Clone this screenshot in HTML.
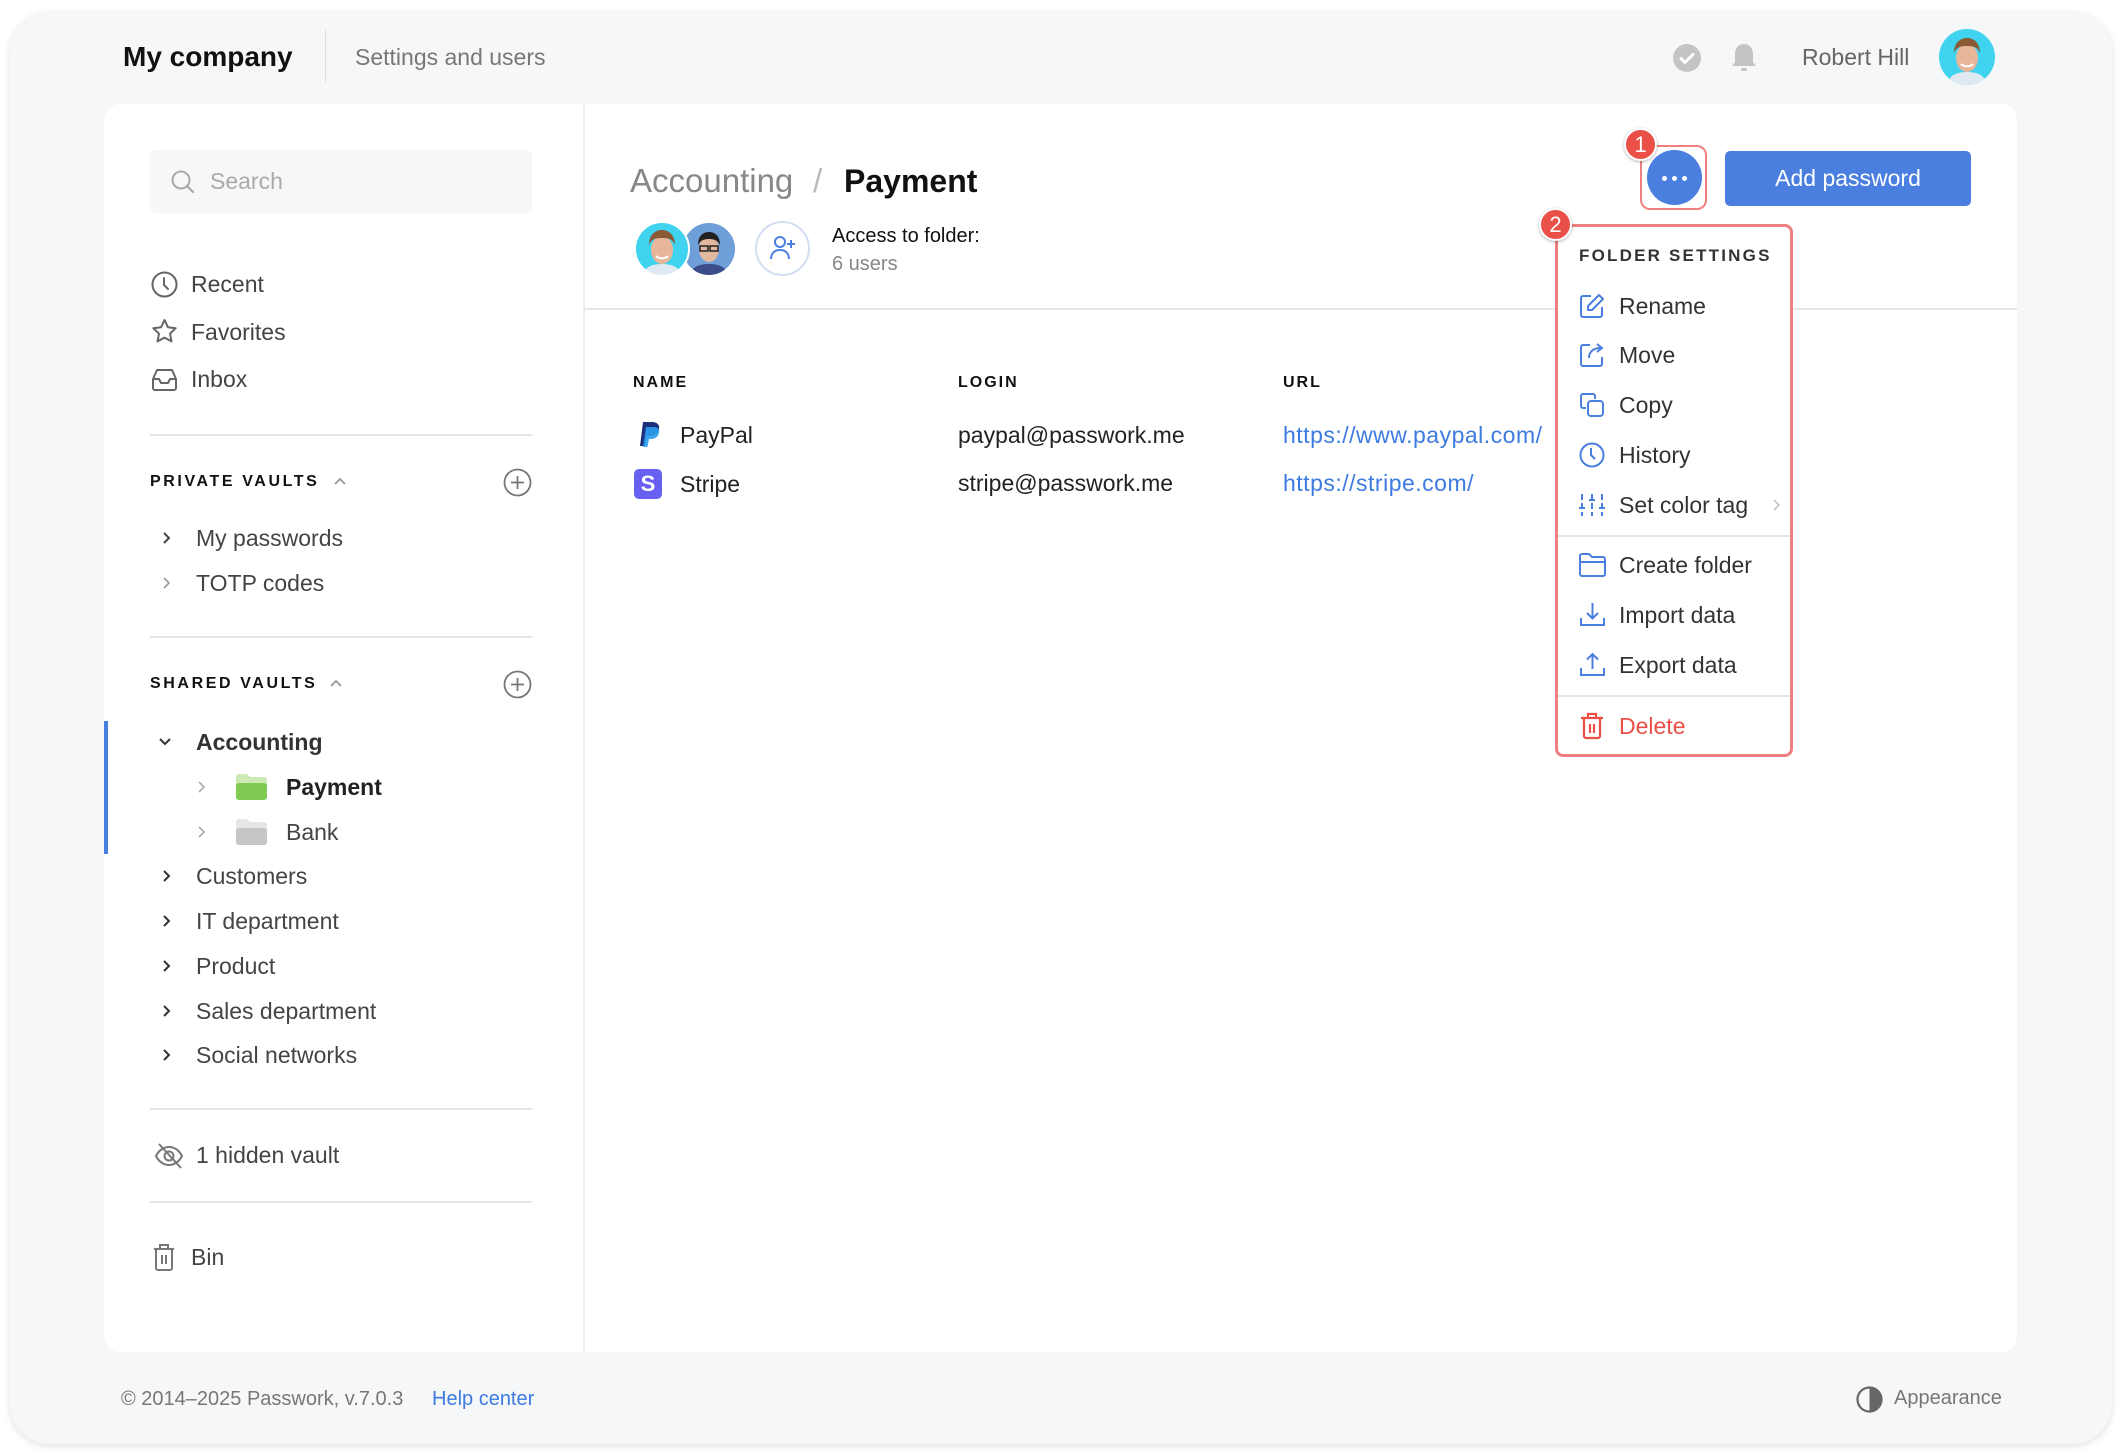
<!DOCTYPE html>
<html><head><meta charset="utf-8">
<style>
*{margin:0;padding:0;box-sizing:border-box}
html,body{width:2124px;height:1456px;background:#fff;overflow:hidden;font-family:"Liberation Sans",sans-serif;color:#333}
#win{position:absolute;left:10px;top:12px;width:2102px;height:1432px;background:#f6f7f9;border-radius:40px;box-shadow:0 2px 8px rgba(0,0,0,.12)}
.t{position:absolute;white-space:nowrap;line-height:32px}
#card{position:absolute;left:104px;top:104px;width:1913px;height:1248px;background:#fff;border-radius:16px}
.hr{position:absolute;height:2px;background:#e4e5e8}
.side{font-size:23px;color:#444}
.cap{font-size:16px;font-weight:bold;letter-spacing:2.6px;color:#111}
svg{position:absolute;overflow:visible}
.mi{font-size:23px;color:#333;left:1619px}
</style></head><body>
<div id="win"></div>

<!-- header -->
<div class="t" style="left:123px;top:41px;font-size:28px;font-weight:bold;color:#111">My company</div>
<div style="position:absolute;left:325px;top:30px;width:1px;height:52px;background:#ddd"></div>
<div class="t" style="left:355px;top:41px;font-size:23px;color:#777">Settings and users</div>
<svg style="left:1672px;top:43px" width="30" height="30" viewBox="0 0 30 30"><circle cx="15" cy="15" r="14" fill="#c4c4c4"/><path d="M9 15.5l4 4 8-8" stroke="#fff" stroke-width="3" fill="none" stroke-linecap="round" stroke-linejoin="round"/></svg>
<svg style="left:1729px;top:42px" width="30" height="32" viewBox="0 0 30 32"><path d="M15 2c-6 0-9 5-9 10v8l-3 4h24l-3-4v-8c0-5-3-10-9-10z" fill="#c4c4c4"/><rect x="12" y="26" width="6" height="3" rx="1.5" fill="#c4c4c4"/></svg>
<div class="t" style="left:1802px;top:41px;font-size:23px;color:#666">Robert Hill</div>
<svg style="left:1939px;top:29px" width="56" height="56" viewBox="0 0 56 56"><clipPath id="c0"><circle cx="28" cy="28" r="28"/></clipPath><g clip-path="url(#c0)"><rect width="56" height="56" fill="#3fd3ef"/><path d="M8 56c2-10 10-13 20-13s18 3 20 13z" fill="#dfe9f2"/><ellipse cx="28" cy="29" rx="11" ry="14" fill="#e8b79a"/><path d="M15 24c0-10 6-15 13-15s13 5 13 15c-2-5-5-7-13-7s-11 2-13 7z" fill="#8a5a35"/><path d="M22 35c3 3 9 3 12 0" stroke="#fff" stroke-width="2" fill="none"/></g></svg>

<div id="card"></div>
<div style="position:absolute;left:583px;top:104px;width:2px;height:1248px;background:#ececee"></div>

<!-- sidebar -->
<div style="position:absolute;left:150px;top:150px;width:382px;height:63px;background:#f6f7f9;border-radius:6px"></div>
<svg style="left:170px;top:169px" width="26" height="26" viewBox="0 0 26 26"><circle cx="11" cy="11" r="8.5" stroke="#aaa" stroke-width="2" fill="none"/><path d="M17 17l6 6" stroke="#aaa" stroke-width="2.2" stroke-linecap="round"/></svg>
<div class="t" style="left:210px;top:165px;font-size:23px;color:#aaa">Search</div>

<svg style="left:151px;top:271px" width="27" height="27" viewBox="0 0 27 27"><circle cx="13.5" cy="13.5" r="12" stroke="#666" stroke-width="2" fill="none"/><path d="M13 7v7l4 4" stroke="#666" stroke-width="2" fill="none" stroke-linecap="round"/></svg>
<div class="t side" style="left:191px;top:268px">Recent</div>
<svg style="left:151px;top:318px" width="27" height="27" viewBox="0 0 27 27"><path d="M13.5 2l3.4 7.2 7.8 1-5.7 5.4 1.5 7.8-7-3.8-7 3.8 1.5-7.8L2.3 10.2l7.8-1z" stroke="#666" stroke-width="2" fill="none" stroke-linejoin="round"/></svg>
<div class="t side" style="left:191px;top:316px">Favorites</div>
<svg style="left:151px;top:367px" width="27" height="25" viewBox="0 0 27 25"><path d="M2 12l4-9h15l4 9v9a2 2 0 0 1-2 2H4a2 2 0 0 1-2-2z M2 12h6l2 4h7l2-4h6" stroke="#666" stroke-width="2" fill="none" stroke-linejoin="round"/></svg>
<div class="t side" style="left:191px;top:363px">Inbox</div>

<div class="hr" style="left:150px;top:434px;width:382px"></div>
<div class="t cap" style="left:150px;top:466px">PRIVATE VAULTS</div>
<svg style="left:333px;top:476px" width="14" height="10" viewBox="0 0 14 10"><path d="M2 8l5-5 5 5" stroke="#999" stroke-width="1.8" fill="none"/></svg>
<svg style="left:503px;top:468px" width="29" height="29" viewBox="0 0 29 29"><circle cx="14.5" cy="14.5" r="13" stroke="#777" stroke-width="1.8" fill="none"/><path d="M14.5 8v13M8 14.5h13" stroke="#777" stroke-width="1.8"/></svg>
<svg style="left:161px;top:531px" width="10" height="14" viewBox="0 0 10 14"><path d="M3 2l5 5-5 5" stroke="#444" stroke-width="2" fill="none"/></svg>
<div class="t side" style="left:196px;top:522px">My passwords</div>
<svg style="left:161px;top:576px" width="10" height="14" viewBox="0 0 10 14"><path d="M3 2l5 5-5 5" stroke="#999" stroke-width="1.6" fill="none"/></svg>
<div class="t side" style="left:196px;top:567px">TOTP codes</div>

<div class="hr" style="left:150px;top:636px;width:382px"></div>
<div class="t cap" style="left:150px;top:668px">SHARED VAULTS</div>
<svg style="left:329px;top:678px" width="14" height="10" viewBox="0 0 14 10"><path d="M2 8l5-5 5 5" stroke="#999" stroke-width="1.8" fill="none"/></svg>
<svg style="left:503px;top:670px" width="29" height="29" viewBox="0 0 29 29"><circle cx="14.5" cy="14.5" r="13" stroke="#777" stroke-width="1.8" fill="none"/><path d="M14.5 8v13M8 14.5h13" stroke="#777" stroke-width="1.8"/></svg>

<div style="position:absolute;left:104px;top:721px;width:4px;height:133px;background:#4a7fe0"></div>
<svg style="left:158px;top:737px" width="14" height="10" viewBox="0 0 14 10"><path d="M2 2l5 5 5-5" stroke="#333" stroke-width="2" fill="none"/></svg>
<div class="t side" style="left:196px;top:726px;font-weight:bold;color:#333">Accounting</div>
<svg style="left:196px;top:780px" width="10" height="14" viewBox="0 0 10 14"><path d="M3 2l5 5-5 5" stroke="#aaa" stroke-width="1.6" fill="none"/></svg>
<svg style="left:236px;top:774px" width="31" height="26" viewBox="0 0 31 26"><path d="M0 3a3 3 0 0 1 3-3h8l3 3h14a3 3 0 0 1 3 3v17a3 3 0 0 1-3 3H3a3 3 0 0 1-3-3z" fill="#cde9b5"/><rect y="9" width="31" height="17" rx="3" fill="#80cc52"/></svg>
<div class="t side" style="left:286px;top:771px;font-weight:bold;color:#222">Payment</div>
<svg style="left:196px;top:825px" width="10" height="14" viewBox="0 0 10 14"><path d="M3 2l5 5-5 5" stroke="#aaa" stroke-width="1.6" fill="none"/></svg>
<svg style="left:236px;top:819px" width="31" height="26" viewBox="0 0 31 26"><path d="M0 3a3 3 0 0 1 3-3h8l3 3h14a3 3 0 0 1 3 3v17a3 3 0 0 1-3 3H3a3 3 0 0 1-3-3z" fill="#e6e6e6"/><rect y="9" width="31" height="17" rx="3" fill="#c6c6c6"/></svg>
<div class="t side" style="left:286px;top:816px">Bank</div>

<svg style="left:161px;top:869px" width="10" height="14" viewBox="0 0 10 14"><path d="M3 2l5 5-5 5" stroke="#333" stroke-width="2" fill="none"/></svg>
<div class="t side" style="left:196px;top:860px">Customers</div>
<svg style="left:161px;top:914px" width="10" height="14" viewBox="0 0 10 14"><path d="M3 2l5 5-5 5" stroke="#333" stroke-width="2" fill="none"/></svg>
<div class="t side" style="left:196px;top:905px">IT department</div>
<svg style="left:161px;top:959px" width="10" height="14" viewBox="0 0 10 14"><path d="M3 2l5 5-5 5" stroke="#333" stroke-width="2" fill="none"/></svg>
<div class="t side" style="left:196px;top:950px">Product</div>
<svg style="left:161px;top:1004px" width="10" height="14" viewBox="0 0 10 14"><path d="M3 2l5 5-5 5" stroke="#333" stroke-width="2" fill="none"/></svg>
<div class="t side" style="left:196px;top:995px">Sales department</div>
<svg style="left:161px;top:1048px" width="10" height="14" viewBox="0 0 10 14"><path d="M3 2l5 5-5 5" stroke="#333" stroke-width="2" fill="none"/></svg>
<div class="t side" style="left:196px;top:1039px">Social networks</div>

<div class="hr" style="left:150px;top:1108px;width:382px"></div>
<svg style="left:154px;top:1142px" width="30" height="28" viewBox="0 0 30 28"><path d="M2 14c3-6 8-9 13-9s10 3 13 9c-3 6-8 9-13 9S5 20 2 14z" stroke="#777" stroke-width="2" fill="none"/><circle cx="15" cy="14" r="4.5" stroke="#777" stroke-width="2" fill="none"/><path d="M5 2l22 24" stroke="#777" stroke-width="2"/></svg>
<div class="t side" style="left:196px;top:1139px">1 hidden vault</div>
<div class="hr" style="left:150px;top:1201px;width:382px"></div>
<svg style="left:152px;top:1243px" width="24" height="29" viewBox="0 0 24 29"><path d="M2 6h20M8 6V2h8v4M4 6v19a2 2 0 0 0 2 2h12a2 2 0 0 0 2-2V6M10 12v9M14 12v9" stroke="#777" stroke-width="2" fill="none"/></svg>
<div class="t side" style="left:191px;top:1241px">Bin</div>

<!-- footer -->
<div class="t" style="left:121px;top:1383px;font-size:20px;color:#777">© 2014–2025 Passwork, v.7.0.3</div>
<div class="t" style="left:432px;top:1383px;font-size:20px;color:#3d7be0">Help center</div>
<svg style="left:1856px;top:1386px" width="27" height="27" viewBox="0 0 27 27"><circle cx="13.5" cy="13.5" r="12" stroke="#666" stroke-width="2.2" fill="none"/><path d="M13.5 1.5a12 12 0 0 1 0 24z" fill="#666"/></svg>
<div class="t" style="left:1894px;top:1382px;font-size:20px;color:#777">Appearance</div>

<!-- main -->
<div class="t" style="left:630px;top:164px;font-size:33px;color:#888;line-height:34px">Accounting</div>
<div class="t" style="left:813px;top:164px;font-size:33px;color:#bbb;line-height:34px">/</div>
<div class="t" style="left:844px;top:164px;font-size:32px;color:#111;font-weight:bold;line-height:34px">Payment</div>

<svg style="left:681px;top:221px" width="56" height="56" viewBox="0 0 56 56"><clipPath id="c2"><circle cx="28" cy="28" r="27"/></clipPath><g clip-path="url(#c2)"><rect width="56" height="56" fill="#6f9fd8"/><path d="M8 56c2-10 10-13 20-13s18 3 20 13z" fill="#3b4e8a"/><ellipse cx="28" cy="28" rx="10" ry="13" fill="#e2b9a0"/><path d="M17 24c0-9 5-13 11-13s11 4 11 13c-2-4-5-6-11-6s-9 2-11 6z" fill="#222"/><rect x="19" y="25" width="8" height="5" stroke="#222" stroke-width="1.5" fill="none"/><rect x="29" y="25" width="8" height="5" stroke="#222" stroke-width="1.5" fill="none"/></g><circle cx="28" cy="28" r="27" stroke="#fff" stroke-width="2" fill="none"/></svg>
<svg style="left:634px;top:221px" width="56" height="56" viewBox="0 0 56 56"><clipPath id="c1"><circle cx="28" cy="28" r="27"/></clipPath><g clip-path="url(#c1)"><rect width="56" height="56" fill="#3fd3ef"/><path d="M8 56c2-10 10-13 20-13s18 3 20 13z" fill="#dfe9f2"/><ellipse cx="28" cy="29" rx="11" ry="14" fill="#e8b79a"/><path d="M15 24c0-10 6-15 13-15s13 5 13 15c-2-5-5-7-13-7s-11 2-13 7z" fill="#8a5a35"/><path d="M22 35c3 3 9 3 12 0" stroke="#fff" stroke-width="2" fill="none"/></g><circle cx="28" cy="28" r="27" stroke="#fff" stroke-width="2" fill="none"/></svg>
<div style="position:absolute;left:755px;top:221px;width:55px;height:55px;border:2px solid #d3def3;border-radius:50%"></div>
<svg style="left:769px;top:235px" width="28" height="26" viewBox="0 0 28 26"><circle cx="11" cy="7" r="5" stroke="#4a7fe0" stroke-width="2" fill="none"/><path d="M2 24c0-6 4-9 9-9s9 3 9 9" stroke="#4a7fe0" stroke-width="2" fill="none"/><path d="M22 5v8M18 9h8" stroke="#4a7fe0" stroke-width="2"/></svg>
<div class="t" style="left:832px;top:220px;font-size:20px;color:#111">Access to folder:</div>
<div class="t" style="left:832px;top:248px;font-size:20px;color:#888">6 users</div>
<div class="hr" style="left:585px;top:308px;width:1432px"></div>

<div class="t cap" style="left:633px;top:367px;letter-spacing:2px">NAME</div>
<div class="t cap" style="left:958px;top:367px;letter-spacing:2px">LOGIN</div>
<div class="t cap" style="left:1283px;top:367px;letter-spacing:2px">URL</div>

<svg style="left:639px;top:421px" width="22" height="27" viewBox="0 0 22 27"><path d="M4 1h9c5 0 8 3 7 7-1 5-5 7-9 7H8l-2 10H1z" fill="#1d2f7a"/><path d="M7 6h8c4 0 6 2 5 6-1 4-4 6-8 6h-2l-1.5 8H4z" fill="#2a9ef0" opacity=".9"/></svg>
<div class="t" style="left:680px;top:419px;font-size:23px;color:#222">PayPal</div>
<div class="t" style="left:958px;top:419px;font-size:23px;color:#222">paypal@passwork.me</div>
<div class="t" style="left:1283px;top:419px;font-size:23px;color:#3d7be0;letter-spacing:0.5px">https://www.paypal.com/</div>
<div style="position:absolute;left:634px;top:469px;width:28px;height:30px;background:#6760f0;border-radius:5px;color:#fff;font-weight:bold;font-size:22px;text-align:center;line-height:30px">S</div>
<div class="t" style="left:680px;top:468px;font-size:23px;color:#222">Stripe</div>
<div class="t" style="left:958px;top:467px;font-size:23px;color:#222">stripe@passwork.me</div>
<div class="t" style="left:1283px;top:467px;font-size:23px;color:#3d7be0;letter-spacing:0.5px">https://stripe.com/</div>

<!-- top right buttons -->
<div style="position:absolute;left:1640px;top:145px;width:67px;height:65px;border:2.5px solid #f08080;border-radius:10px"></div>
<div style="position:absolute;left:1647px;top:150px;width:55px;height:55px;border-radius:50%;background:#4a7fe0"></div>
<div style="position:absolute;left:1662px;top:176px;width:5px;height:5px;border-radius:50%;background:#fff;box-shadow:10px 0 #fff,20px 0 #fff"></div>
<div style="position:absolute;left:1624px;top:128px;width:33px;height:33px;border-radius:50%;background:#ea4f48;border:2px solid #fff;box-shadow:0 1px 3px rgba(0,0,0,.3);color:#fff;font-size:22px;text-align:center;line-height:29px">1</div>
<div style="position:absolute;left:1725px;top:151px;width:246px;height:55px;border-radius:5px;background:#4a7fe0;color:#fff;font-size:23px;text-align:center;line-height:55px">Add password</div>

<!-- menu -->
<div style="position:absolute;left:1555px;top:224px;width:238px;height:533px;background:#fff;border:3px solid #f08080;border-radius:8px"></div>
<div class="hr" style="left:1558px;top:535px;width:232px"></div>
<div class="hr" style="left:1558px;top:695px;width:232px"></div>
<div style="position:absolute;left:1539px;top:208px;width:33px;height:33px;border-radius:50%;background:#ea4f48;border:2px solid #fff;box-shadow:0 1px 3px rgba(0,0,0,.3);color:#fff;font-size:22px;text-align:center;line-height:29px">2</div>
<div class="t" style="left:1579px;top:240px;font-size:17px;font-weight:bold;letter-spacing:2.2px;color:#333">FOLDER SETTINGS</div>

<svg style="left:1579px;top:293px" width="26" height="26" viewBox="0 0 26 26"><path d="M12 3H4a2 2 0 0 0-2 2v17a2 2 0 0 0 2 2h17a2 2 0 0 0 2-2v-8" stroke="#4a7fe0" stroke-width="2" fill="none"/><path d="M20 2l4 4-11 11H9v-4z" stroke="#4a7fe0" stroke-width="2" fill="none" stroke-linejoin="round"/></svg>
<div class="t mi" style="top:290px">Rename</div>
<svg style="left:1579px;top:342px" width="26" height="26" viewBox="0 0 26 26"><path d="M11 3H4a2 2 0 0 0-2 2v17a2 2 0 0 0 2 2h17a2 2 0 0 0 2-2v-7" stroke="#4a7fe0" stroke-width="2" fill="none"/><path d="M10 16c0-6 4-10 12-10M18 2l5 4-5 4" stroke="#4a7fe0" stroke-width="2" fill="none"/></svg>
<div class="t mi" style="top:339px">Move</div>
<svg style="left:1579px;top:392px" width="26" height="26" viewBox="0 0 26 26"><path d="M16 7V4a2 2 0 0 0-2-2H4a2 2 0 0 0-2 2v10a2 2 0 0 0 2 2h3" stroke="#4a7fe0" stroke-width="2" fill="none"/><rect x="9" y="9" width="15" height="15" rx="3" stroke="#4a7fe0" stroke-width="2" fill="none"/></svg>
<div class="t mi" style="top:389px">Copy</div>
<svg style="left:1579px;top:442px" width="26" height="26" viewBox="0 0 26 26"><circle cx="13" cy="13" r="11.5" stroke="#4a7fe0" stroke-width="2" fill="none"/><path d="M12 6v7l4 4" stroke="#4a7fe0" stroke-width="2" fill="none"/></svg>
<div class="t mi" style="top:439px">History</div>
<svg style="left:1579px;top:492px" width="26" height="26" viewBox="0 0 26 26"><path d="M3 2v22M13 2v22M23 2v22" stroke="#4a7fe0" stroke-width="2" stroke-dasharray="6 3"/><path d="M0 16h6M10 8h6M20 16h6" stroke="#4a7fe0" stroke-width="2"/></svg>
<div class="t mi" style="top:489px">Set color tag</div>
<svg style="left:1772px;top:499px" width="8" height="12" viewBox="0 0 8 12"><path d="M2 1l5 5-5 5" stroke="#bbb" stroke-width="1.4" fill="none"/></svg>
<svg style="left:1579px;top:553px" width="27" height="24" viewBox="0 0 27 24"><path d="M1 3a2 2 0 0 1 2-2h7l3 3h11a2 2 0 0 1 2 2v15a2 2 0 0 1-2 2H3a2 2 0 0 1-2-2zM1 9h25" stroke="#4a7fe0" stroke-width="2" fill="none"/></svg>
<div class="t mi" style="top:549px">Create folder</div>
<svg style="left:1579px;top:602px" width="27" height="26" viewBox="0 0 27 26"><path d="M13.5 1v15M8 11l5.5 5.5L19 11M2 16v7h23v-7" stroke="#4a7fe0" stroke-width="2" fill="none"/></svg>
<div class="t mi" style="top:599px">Import data</div>
<svg style="left:1579px;top:652px" width="27" height="26" viewBox="0 0 27 26"><path d="M13.5 17V2M8 7.5l5.5-5.5L19 7.5M2 16v7h23v-7" stroke="#4a7fe0" stroke-width="2" fill="none"/></svg>
<div class="t mi" style="top:649px">Export data</div>
<svg style="left:1580px;top:712px" width="24" height="28" viewBox="0 0 24 28"><path d="M1 6h22M8 6V2h8v4M4 6v18a2 2 0 0 0 2 2h12a2 2 0 0 0 2-2V6M10 12v9M14 12v9" stroke="#ea4f48" stroke-width="2.2" fill="none"/></svg>
<div class="t mi" style="top:710px;color:#ea4f48">Delete</div>
</body></html>
